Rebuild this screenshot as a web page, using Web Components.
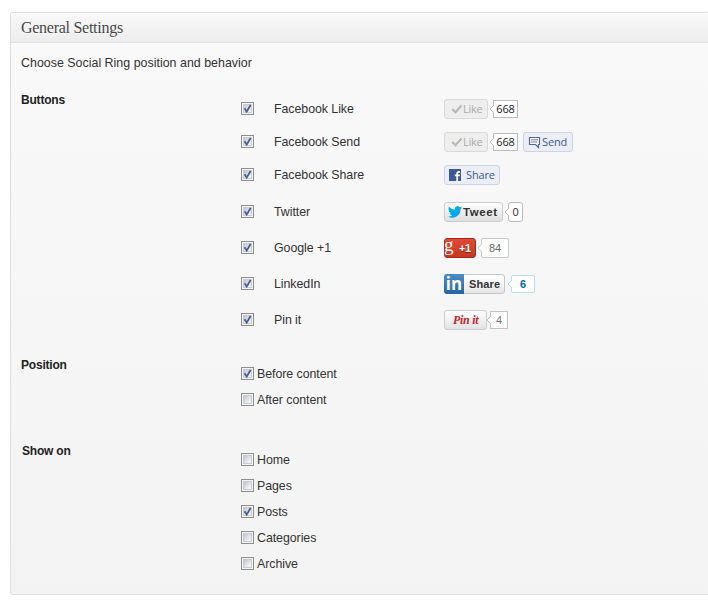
<!DOCTYPE html>
<html lang="en">
<head>
<meta charset="utf-8">
<title>General Settings</title>
<style>
html{overflow:hidden}
body{margin:0;background:#fff;color:#333;font:12.4px/16px "Liberation Sans",Arial,sans-serif;overflow:hidden;height:605px}
</style>
</head>
<body>
<settings-page></settings-page>
<script>
const define = (name, css, html) => customElements.define(name, class extends HTMLElement {
  constructor() {
    super();
    this.attachShadow({mode: 'open'}).innerHTML =
      `<style>*{box-sizing:border-box}:host{box-sizing:border-box}${css}</style>` +
      (typeof html === 'function' ? html(this) : html);
  }
});

define('check-box', `
  :host{display:block;flex:none;width:13px;height:13px;margin-bottom:1px}
  svg{display:block}`,
  el => `<svg width="13" height="13"><defs><linearGradient id="g" x1="0" y1="0" x2="1" y2="1"><stop offset="0" stop-color="#bfc4cc"/><stop offset=".6" stop-color="#e6e8ea"/><stop offset="1" stop-color="#f8f8f8"/></linearGradient></defs>
  <rect x=".5" y=".5" width="12" height="12" fill="#f4f4f4" stroke="#8e8f8f"/>
  <rect x="2" y="2" width="9" height="9" fill="#c9cdd2"/><rect x="3" y="3" width="7" height="7" fill="url(#g)"/>
  ${el.hasAttribute('checked') ? '<path d="M3.6 6.2L5.7 9.6L9.6 3" fill="none" stroke="#475c9a" stroke-width="1.8"/>' : ''}</svg>`);

define('option-row', `
  :host{display:flex;align-items:center;height:var(--row-h,26px)}
  .label{width:170px;margin-left:var(--gap,3px);white-space:nowrap;letter-spacing:-.06px;line-height:16px}`,
  el => `<check-box ${el.hasAttribute('checked') ? 'checked' : ''}></check-box><span class="label"><slot></slot></span><slot name="share"></slot>`);

define('share-group', `:host{display:flex;align-items:center;height:20px}`, `<slot></slot>`);

/* Counter bubble whose arrow points at the button on its left. */
define('count-bubble', `
  :host{display:flex;align-items:center;flex:none;height:var(--bubble-h,20px);margin-left:var(--ml,2px);color:var(--ink,#333)}
  svg{display:block;flex:none;margin-right:-1px;position:relative;z-index:1}
  .box{display:flex;align-items:center;justify-content:center;width:var(--w);height:100%;background:#fff;border:1px solid var(--line,#bbb);border-radius:var(--r,0)}
  span{white-space:nowrap}`,
  `<svg width="5" height="8"><path d="M5 0L1 4L5 8" fill="#fff" stroke="var(--line,#bbb)"/></svg><div class="box"><span><slot></slot></span></div>`);

define('share-button', `
  :host{display:flex;align-items:center;flex:none;height:20px;width:var(--w);border:1px solid var(--line);border-radius:3px;background:var(--bg);color:var(--ink);white-space:nowrap}
  ::slotted(svg){display:block;flex:none}`,
  `<slot name="icon"></slot><slot></slot>`);

define('form-section', `
  :host{display:flex;align-items:flex-start;height:var(--section-h)}
  .title{width:220px;padding-left:var(--indent,0px);font-weight:bold;font-size:12px;color:#222;line-height:16px;letter-spacing:-.2px}
  .body{padding-top:var(--pt,9px)}`,
  el => `<div class="title">${el.getAttribute('heading')}</div><div class="body"><slot></slot></div>`);

define('settings-panel', `
  :host{display:block;width:720px;height:583px;border:1px solid #dfdfdf;border-radius:3px;background:linear-gradient(#f9f9f9,#f3f3f3)}
  header{height:30px;padding-left:10px;border-bottom:1px solid #dfdfdf;border-radius:3px 3px 0 0;background:linear-gradient(#f9f9f9,#ececec);box-shadow:0 1px 0 #fff,inset 0 1px 0 #fff;color:#464646;font:16px/30px "Liberation Serif",Georgia,serif;letter-spacing:-.27px;text-shadow:0 1px 0 #fff}
  .content{padding:12px 0 0 10px}
  .intro{line-height:16px;letter-spacing:.02px;height:37px}`,
  el => `<header>${el.getAttribute('heading')}</header><div class="content"><div class="intro">${el.getAttribute('intro')}</div><slot></slot></div>`);

const like = `<share-button class="like"><svg slot="icon" width="12" height="10"><path d="M1.2 5L4.5 8.2L10.5 1.5" fill="none" stroke="#b8b8b8" stroke-width="2.2"/></svg><span>Like</span></share-button><count-bubble class="fbc">668</count-bubble>`;

define('settings-page', `
  :host{display:block;padding:12px 0 0 10px}
  .buttons option-row{--gap:20px}
  .like{--w:44px;--line:#d9d9d9;--bg:#eeeeee;--ink:#aaa;padding-left:6px;font:11px "Open Sans",sans-serif;letter-spacing:-.3px}
  .like span,.send span,.fshare span,.fbc{position:relative;top:-.5px}
  .fbc{--ml:1px;--w:25px;--bubble-h:18px;font:11px "Open Sans",sans-serif;--ink:#222;letter-spacing:-.15px}
  .send,.fshare{--line:#cad4e7;--bg:#eceef5;--ink:#3b5998;font:11px "Open Sans",sans-serif}
  .send{--w:50px;margin-left:5px;padding-left:4px;letter-spacing:-.15px}
  .fshare{--w:56px;padding-left:4px;letter-spacing:-.15px}
  .send span{margin-left:1px}.fshare span{margin-left:5px}
  .tweet{--w:59px;--line:#ccc;--bg:linear-gradient(#fff,#dedede);--ink:#333;padding-left:3px;font:bold 11.5px "Liberation Sans",sans-serif;letter-spacing:.6px}
  .tweet span{margin-left:1px}
  .gplus{--w:32px;--line:#a7281b;--bg:linear-gradient(#df4b36,#c8371f);--ink:#fff;font:bold 11px "Liberation Sans",sans-serif}
  .gplus .g{display:block;width:11px;font:19px/16px "Liberation Serif",serif;margin-left:-1px;margin-top:-7px}
  .gplus .plus{margin-left:4px;letter-spacing:-.3px;text-shadow:0 1px 1px #7a2417}
  .linked{--w:61px;--line:#c5c5c5;--bg:linear-gradient(#fff,#e6e6e6);--ink:#333;font:bold 11px "Liberation Sans",sans-serif}
  .linked .in{display:block;width:20px;height:20px;margin-left:-1px;border-radius:3px 0 0 3px;background:linear-gradient(#4b8cc4,#2466a5);color:#fff;font:bold 17px/20px "Open Sans",sans-serif;text-align:center}
  .linked .t{margin-left:5px;letter-spacing:.15px}
  .pin{--w:43px;--line:#ccc;--bg:linear-gradient(#fff,#e3e3e3);--ink:#c92228;padding-left:8px;font:italic bold 12px "Liberation Serif",serif;letter-spacing:-.3px}
  `, `
<settings-panel heading="General Settings" intro="Choose Social Ring position and behavior">
 <form-section heading="Buttons" style="--section-h:265px;--pt:0px" class="buttons">
  <option-row checked style="--row-h:34px">Facebook Like<share-group slot="share">${like}</share-group></option-row>
  <option-row checked style="--row-h:32px">Facebook Send<share-group slot="share">${like}<share-button class="send"><svg slot="icon" width="13" height="13" fill="none" stroke="#5068a3"><path d="M1.5 1.5H11.5V8.5H10.5V11.5L7.5 8.5H1.5Z" fill="#f8f9fc" stroke-width="1.2"/><path d="M3 3.8H10M3 6H9" stroke-width=".8"/></svg><span>Send</span></share-button></share-group></option-row>
  <option-row checked style="--row-h:34px">Facebook Share<share-group slot="share"><share-button class="fshare"><svg slot="icon" width="12" height="12"><path fill="#3b5998" d="M0 0H12V12H0Z"/><path d="M11 2.9H9.7Q8.2 2.9 8.2 4.6V12M5.8 6.4H10.8" fill="none" stroke="#fff" stroke-width="1.8"/></svg><span>Share</span></share-button></share-group></option-row>
  <option-row checked style="--row-h:40px">Twitter<share-group slot="share"><share-button class="tweet"><svg slot="icon" width="14" height="12" viewBox="0 0 24 20"><path fill="#00a8ec" d="M24 2.4a10 10 0 0 1-2.8.8A5 5 0 0 0 23.3.5a10 10 0 0 1-3.1 1.2 4.9 4.9 0 0 0-8.4 4.5A14 14 0 0 1 1.7 1a4.9 4.9 0 0 0 1.5 6.6A5 5 0 0 1 1 7a4.9 4.9 0 0 0 3.9 4.9 5 5 0 0 1-2.2.1 4.9 4.9 0 0 0 4.6 3.4A9.9 9.9 0 0 1 0 17.5 14 14 0 0 0 21.5 5.1 10 10 0 0 0 24 2.4"/></svg><span>Tweet</span></share-button><count-bubble style="--ml:1px;--w:15px;--r:3px;font:11px 'Liberation Sans',sans-serif">0</count-bubble></share-group></option-row>
  <option-row checked style="--row-h:32px">Google +1<share-group slot="share"><share-button class="gplus"><span class="g">g</span><span class="plus">+1</span></share-button><count-bubble style="--ml:1px;--w:28px;--r:2px;--ink:#666;--line:#c8c8c8;font:11px 'Liberation Sans',sans-serif">84</count-bubble></share-group></option-row>
  <option-row checked style="--row-h:40px">LinkedIn<share-group slot="share"><share-button class="linked"><span class="in">in</span><span class="t">Share</span></share-button><count-bubble style="--ml:2px;--w:24px;--bubble-h:18px;--r:2px;--line:#b9dcea;--ink:#0064a8;font:bold 11px 'Liberation Sans',sans-serif">6</count-bubble></share-group></option-row>
  <option-row checked style="--row-h:32px">Pin it<share-group slot="share"><share-button class="pin">Pin it</share-button><count-bubble style="--ml:-1px;--w:18px;--bubble-h:18px;--line:#c5bfc0;--ink:#777;font:11px 'Liberation Sans',sans-serif">4</count-bubble></share-group></option-row>
 </form-section>
 <form-section heading="Position" style="--section-h:86px;--pt:4px">
  <option-row checked>Before content</option-row><option-row>After content</option-row>
 </form-section>
 <form-section heading="Show on" style="--section-h:140px;--pt:4px;--indent:1px">
  <option-row>Home</option-row><option-row>Pages</option-row><option-row checked>Posts</option-row><option-row>Categories</option-row><option-row>Archive</option-row>
 </form-section>
</settings-panel>`);
</script>
</body>
</html>
